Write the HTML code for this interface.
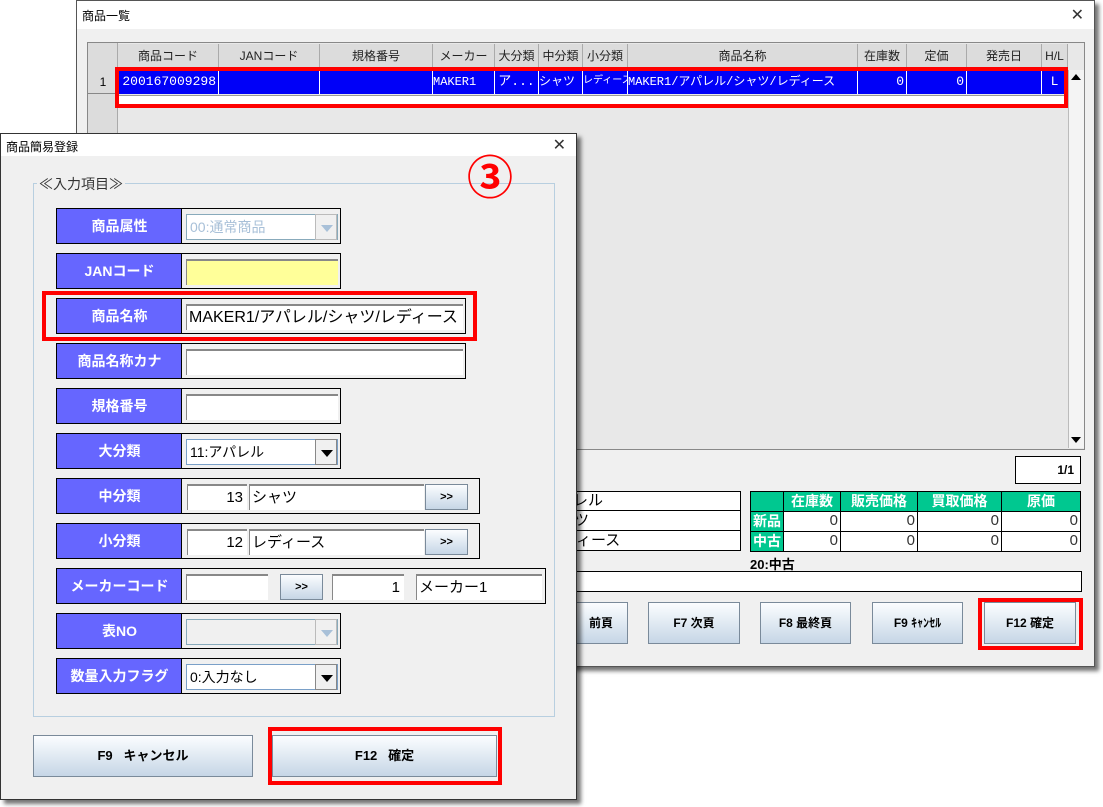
<!DOCTYPE html>
<html><head><meta charset="utf-8"><style>
*{box-sizing:border-box;margin:0;padding:0}
body{width:1103px;height:807px;background:#fff;position:relative;overflow:hidden;font-family:"Liberation Sans","Noto Sans CJK JP",sans-serif;font-size:13px;color:#000}
.a{position:absolute}
.win{background:#f0f0f0;border:1px solid #555;box-shadow:4px 4px 4px rgba(0,0,0,.55)}
.tb{background:#fff;height:28px;font-size:12px;padding:6px 0 0 5px}
.x{position:absolute;right:10px;top:4px;font-size:16px;color:#333}
.th{background:#dcdcdc;border-right:1px solid #aaa;text-align:center;font-size:12px;line-height:24px;top:44px;height:24px;color:#222}
.td{background:#0000f8;color:#fff;border-right:1px solid #fff;line-height:24px;top:70px;height:24px;font-size:13px;font-family:"Liberation Mono","Noto Sans CJK JP",monospace;white-space:nowrap;overflow:hidden}
.btn{background:linear-gradient(#fbfdff,#c6d6e6);border:1px solid #7a8a9a;text-align:center;font-weight:bold;font-size:12px}
.red{border:4px solid #f00}
.lab{background:#6666ff;color:#fff;font-weight:bold;text-align:center;font-size:14px;left:56px;width:126px;height:36px;line-height:34px;border:1px solid #000;border-right:none}
.fr{border:1px solid #000;height:36px;left:181px;background:#f0f0f0}
.in{position:absolute;top:5px;height:26px;background:#fff;border-top:2px solid #888;border-left:1px solid #888;font-size:15px;line-height:24px;white-space:nowrap;overflow:hidden;padding-left:2px}
.cb{position:absolute;top:5px;left:4px;width:152px;height:26px;border:1px solid #7aa0c8;background:#fff;font-size:14px;line-height:24px;padding-left:3px}
.dd{position:absolute;top:5px;left:133px;width:22px;height:26px;border:1px solid #888;background:#f0f0f0}
.dd:after{content:"";position:absolute;left:5px;top:10px;border:6px solid transparent;border-top:7px solid #000;border-bottom:none}
.dd.dis:after{border-top-color:#a8c0d8}
.sb{position:absolute;top:5px;height:26px;width:50px;font-size:11px;line-height:24px}
.g{background:#00c890;color:#fff;font-weight:bold;text-align:center;font-size:15px;border:1px solid #000}
.w{background:#fff;border:1px solid #000;text-align:right;font-size:15px;padding-right:2px;color:#333}
</style></head><body>

<div class="a win" style="left:76px;top:0;width:1019px;height:667px">
<div class="tb">商品一覧<span class="x">✕</span></div>
</div>
<div class="a" style="left:87px;top:42px;width:998px;height:408px;background:#e8e8e8;border:1px solid #888"></div>
<div class="a" style="left:88px;top:43px;width:30px;height:406px;background:#dcdcdc;border-right:1px solid #aaa"></div>
<div class="a" style="left:88px;top:70px;width:30px;height:24px;line-height:24px;text-align:center;font-size:12px;border-bottom:1px solid #888">1</div>
<div class="a" style="left:118px;top:95px;width:950px;height:12px;background:#fff;border-top:1px solid #999"></div>
<div class="a" style="left:1068px;top:70px;width:16px;height:378px;background:#f4f4f4;border-left:1px solid #bbb"></div>
<div class="a" style="left:1071px;top:74px;border:5px solid transparent;border-bottom:6px solid #000;border-top:none"></div>
<div class="a" style="left:1071px;top:437px;border:5px solid transparent;border-top:6px solid #000;border-bottom:none"></div>

<div class="a th" style="left:118px;width:101px">商品コード</div>
<div class="a th" style="left:219px;width:101px">JANコード</div>
<div class="a th" style="left:320px;width:113px">規格番号</div>
<div class="a th" style="left:433px;width:62px">メーカー</div>
<div class="a th" style="left:495px;width:44px">大分類</div>
<div class="a th" style="left:539px;width:44px">中分類</div>
<div class="a th" style="left:583px;width:45px">小分類</div>
<div class="a th" style="left:628px;width:230px">商品名称</div>
<div class="a th" style="left:858px;width:49px">在庫数</div>
<div class="a th" style="left:907px;width:60px">定価</div>
<div class="a th" style="left:967px;width:75px">発売日</div>
<div class="a th" style="left:1042px;width:26px">H/L</div>

<div class="a td" style="left:118px;width:101px;text-align:right;padding-right:2px">200167009298</div>
<div class="a td" style="left:219px;width:101px"></div>
<div class="a td" style="left:320px;width:113px"></div>
<div class="a td" style="left:433px;width:62px;font-size:12px">MAKER1</div>
<div class="a td" style="left:495px;width:44px;text-align:center">ア...</div>
<div class="a td" style="left:539px;width:44px;font-size:12px">シャツ</div>
<div class="a td" style="left:583px;width:45px;font-size:10px">レディース</div>
<div class="a td" style="left:628px;width:230px;font-size:12px">MAKER1/アパレル/シャツ/レディース</div>
<div class="a td" style="left:858px;width:49px;text-align:right;padding-right:2px">0</div>
<div class="a td" style="left:907px;width:60px;text-align:right;padding-right:2px">0</div>
<div class="a td" style="left:967px;width:75px"></div>
<div class="a td" style="left:1042px;width:26px;text-align:center">L</div>
<div class="a red" style="left:115px;top:67px;width:953px;height:41px"></div>

<div class="a" style="left:1015px;top:456px;width:66px;height:28px;background:#fff;border:1px solid #000;text-align:right;padding-right:6px;line-height:26px;font-weight:bold;font-size:12px">1/1</div>
<div class="a" style="left:560px;top:491px;width:181px;height:60px;background:#fff;border:1px solid #000"></div>
<div class="a" style="left:560px;top:491px;width:181px;height:20px;border-bottom:1px solid #000;font-size:15px;line-height:19px;padding-left:13px">レル</div>
<div class="a" style="left:560px;top:511px;width:181px;height:20px;border-bottom:1px solid #000;font-size:15px;line-height:19px;padding-left:14px">ツ</div>
<div class="a" style="left:560px;top:531px;width:181px;height:20px;font-size:15px;line-height:19px;padding-left:16px">ィース</div>

<div class="a g" style="left:750px;top:491px;width:34px;height:21px"></div>
<div class="a g" style="left:783px;top:491px;width:58px;height:21px;font-size:14px;line-height:19px">在庫数</div>
<div class="a g" style="left:840px;top:491px;width:78px;height:21px;font-size:14px;line-height:19px">販売価格</div>
<div class="a g" style="left:917px;top:491px;width:85px;height:21px;font-size:14px;line-height:19px">買取価格</div>
<div class="a g" style="left:1001px;top:491px;width:80px;height:21px;font-size:14px;line-height:19px">原価</div>
<div class="a g" style="left:750px;top:511px;width:34px;height:21px;font-size:14px;line-height:19px">新品</div>
<div class="a g" style="left:750px;top:531px;width:34px;height:21px;font-size:14px;line-height:19px">中古</div>
<div class="a w" style="left:783px;top:511px;width:58px;height:21px">0</div>
<div class="a w" style="left:840px;top:511px;width:78px;height:21px">0</div>
<div class="a w" style="left:917px;top:511px;width:85px;height:21px">0</div>
<div class="a w" style="left:1001px;top:511px;width:80px;height:21px">0</div>
<div class="a w" style="left:783px;top:531px;width:58px;height:21px">0</div>
<div class="a w" style="left:840px;top:531px;width:78px;height:21px">0</div>
<div class="a w" style="left:917px;top:531px;width:85px;height:21px">0</div>
<div class="a w" style="left:1001px;top:531px;width:80px;height:21px">0</div>
<div class="a" style="left:750px;top:554px;font-weight:bold;font-size:13px">20:中古</div>
<div class="a" style="left:560px;top:571px;width:522px;height:21px;background:#fff;border:1px solid #000"></div>

<div class="a btn" style="left:560px;top:602px;width:68px;height:42px;line-height:40px;padding-left:14px">前頁</div>
<div class="a btn" style="left:648px;top:602px;width:92px;height:42px;line-height:40px">F7 次頁</div>
<div class="a btn" style="left:760px;top:602px;width:91px;height:42px;line-height:40px">F8 最終頁</div>
<div class="a btn" style="left:872px;top:602px;width:91px;height:42px;line-height:40px">F9 ｷｬﾝｾﾙ</div>
<div class="a btn" style="left:984px;top:602px;width:92px;height:42px;line-height:40px">F12 確定</div>
<div class="a red" style="left:978px;top:598px;width:105px;height:52px"></div>

<div class="a win" style="left:0;top:133px;width:577px;height:667px;border-color:#333">
<div class="tb" style="height:22px;padding-top:4px">商品簡易登録<span class="x" style="top:1px">✕</span></div>
</div>
<div class="a" style="left:33px;top:183px;width:522px;height:534px;border:1px solid #b8cfe0"></div>
<div class="a" style="left:37px;top:174px;background:#f0f0f0;padding:0 2px;font-size:14px;color:#333">≪入力項目≫</div>
<div class="a" style="left:467px;top:155px;color:#f00;font-size:46px;font-weight:bold;line-height:46px">③</div>

<div class="a lab" style="top:208px">商品属性</div>
<div class="a fr" style="top:208px;width:160px"><div class="cb" style="color:#a8c0d8;border-color:#8ab">00:通常商品</div><div class="dd dis" style="border-color:#bbb"></div></div>

<div class="a lab" style="top:253px">JANコード</div>
<div class="a fr" style="top:253px;width:160px"><div class="in" style="left:4px;width:152px;background:#ffff99"></div></div>

<div class="a lab" style="top:298px">商品名称</div>
<div class="a fr" style="top:298px;width:285px;background:#f0f0f0"><div class="in" style="left:4px;width:277px;font-size:16px">MAKER1/アパレル/シャツ/レディース</div></div>
<div class="a red" style="left:42px;top:291px;width:435px;height:50px"></div>

<div class="a lab" style="top:343px">商品名称カナ</div>
<div class="a fr" style="top:343px;width:285px"><div class="in" style="left:4px;width:277px"></div></div>

<div class="a lab" style="top:388px">規格番号</div>
<div class="a fr" style="top:388px;width:160px"><div class="in" style="left:4px;width:152px"></div></div>

<div class="a lab" style="top:433px">大分類</div>
<div class="a fr" style="top:433px;width:160px"><div class="cb">11:アパレル</div><div class="dd"></div></div>

<div class="a lab" style="top:478px">中分類</div>
<div class="a fr" style="top:478px;width:299px"><div class="in" style="left:5px;width:60px;text-align:right;padding-right:4px">13</div><div class="in" style="left:67px;width:175px">シャツ</div><div class="btn sb" style="left:243px;width:43px">&gt;&gt;</div></div>

<div class="a lab" style="top:523px">小分類</div>
<div class="a fr" style="top:523px;width:299px"><div class="in" style="left:5px;width:60px;text-align:right;padding-right:4px">12</div><div class="in" style="left:67px;width:175px">レディース</div><div class="btn sb" style="left:243px;width:43px">&gt;&gt;</div></div>

<div class="a lab" style="top:568px">メーカーコード</div>
<div class="a fr" style="top:568px;width:365px"><div class="in" style="left:4px;width:82px"></div><div class="btn sb" style="left:98px;width:43px">&gt;&gt;</div><div class="in" style="left:150px;width:72px;text-align:right;padding-right:4px">1</div><div class="in" style="left:234px;width:126px">メーカー1</div></div>

<div class="a lab" style="top:613px">表NO</div>
<div class="a fr" style="top:613px;width:160px"><div class="cb" style="background:#f0f0f0;border-color:#8ab"></div><div class="dd dis" style="border-color:#bbb"></div></div>

<div class="a lab" style="top:658px">数量入力フラグ</div>
<div class="a fr" style="top:658px;width:160px"><div class="cb">0:入力なし</div><div class="dd"></div></div>

<div class="a btn" style="left:33px;top:735px;width:220px;height:42px;line-height:40px;font-size:13px">F9&nbsp;&nbsp;&nbsp;キャンセル</div>
<div class="a btn" style="left:272px;top:735px;width:225px;height:42px;line-height:40px;font-size:13px">F12&nbsp;&nbsp;&nbsp;確定</div>
<div class="a red" style="left:268px;top:727px;width:234px;height:58px"></div>

</body></html>
